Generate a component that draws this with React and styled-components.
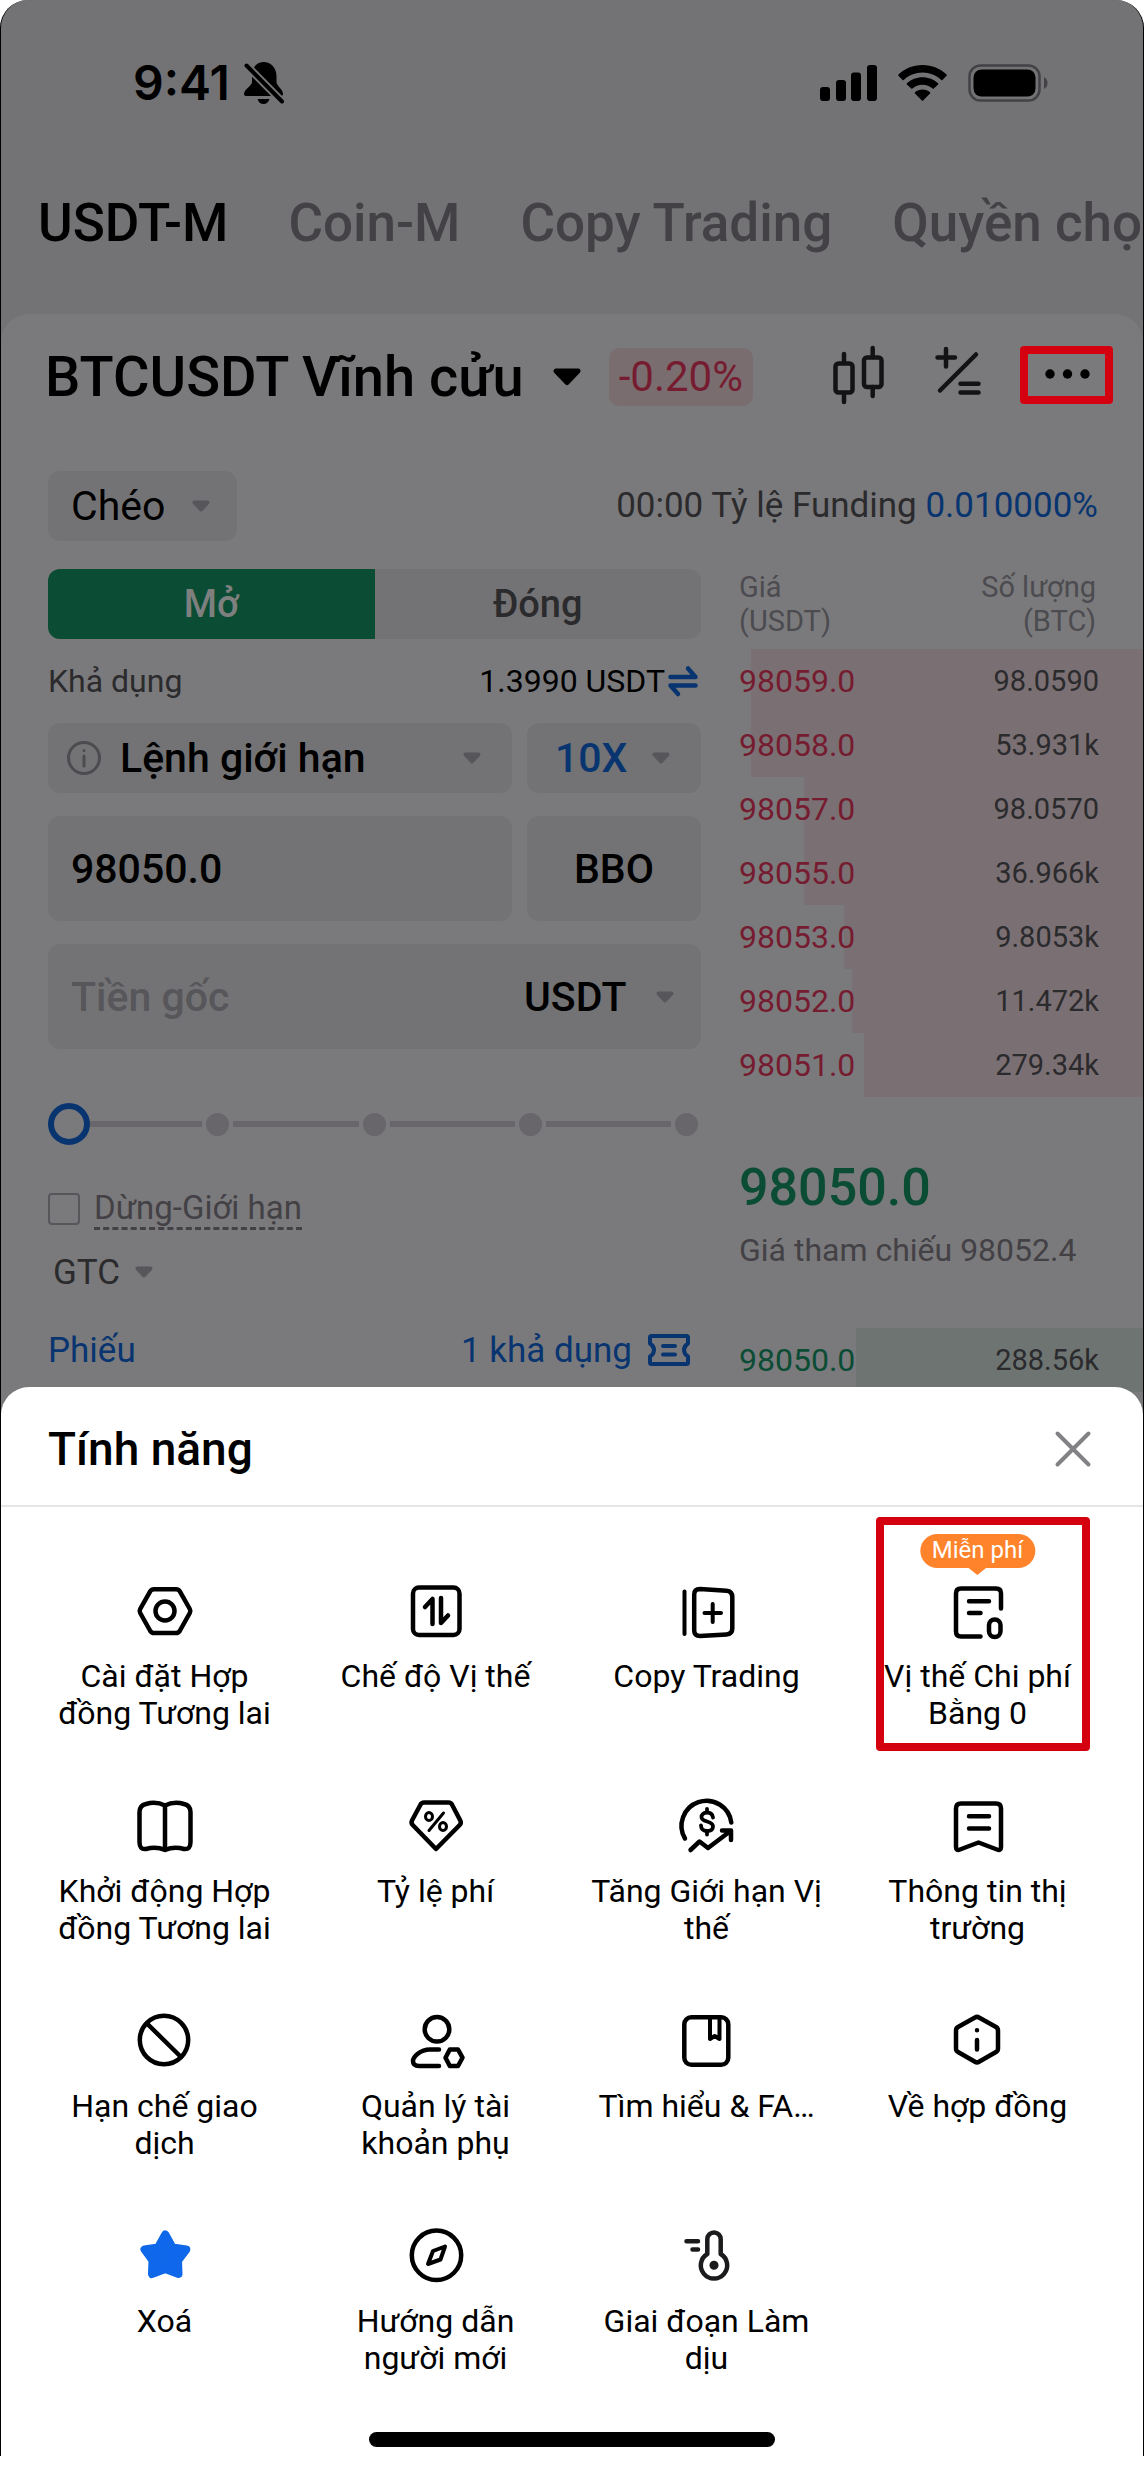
import React, { useState } from "react";
import styled, { createGlobalStyle } from "styled-components";

const color = {
  ink: "#000000",
  screen: "#737375",
  panel: "#7a7a7c",
  field: "#737375",
  strong: "#2b2a2d",
  muted: "#434145",
  faint: "#4c4b4f",
  placeholder: "#57565a",
  rail: "#68666a",
  blue: "#083470",
  red: "#761c30",
  green: "#0b4c34",
  alert: "#d4000f",
  star: "#0f67ea",
};

const GlobalStyle = createGlobalStyle`
  *, *::before, *::after { box-sizing: border-box; }
  body {
    margin: 0;
    padding-bottom: 14px;
    background: #ffffff;
    color: ${color.ink};
    font-family: Roboto, "Noto Sans", sans-serif;
    font-size: 32px;
    overflow-x: hidden;
  }
  button, input, select { font: inherit; color: inherit; margin: 0; }
`;

/* ---------- shell ---------- */

const Frame = styled.div`
  border: 0 solid #000000;
  border-width: 0 1px;
  border-radius: 28px 28px 0 0;
  overflow: hidden;
  background: ${color.screen};
`;

const StatusBar = styled.header`
  display: flex;
  justify-content: space-between;
  align-items: center;
  height: 166px;
  padding: 0 95px 0 132px;
`;

const StatusGroup = styled.div`
  display: flex;
  align-items: center;
  gap: ${(p) => p.$gap}px;
`;

const Clock = styled.span`
  font-family: Inter, sans-serif;
  font-weight: 600;
  font-size: 48px;
  line-height: 56px;
`;

const Tabs = styled.nav`
  display: flex;
  align-items: center;
  gap: 60px;
  height: 114px;
  margin-bottom: 34px;
  padding-left: 37px;
  white-space: nowrap;
`;

const Tab = styled.a`
  font-size: 53px;
  line-height: 64px;
  font-weight: 500;
  text-decoration: none;
  color: ${(p) => (p.$active ? color.ink : color.muted)};
`;

const Panel = styled.main`
  border-radius: 28px 28px 0 0;
  background: ${color.panel};
  padding-bottom: 30px;
`;

/* ---------- instrument ---------- */

const PlainButton = styled.button`
  display: flex;
  align-items: center;
  justify-content: center;
  gap: ${(p) => p.$gap || 0}px;
  padding: 0;
  border: 0;
  background: none;
  color: ${(p) => p.$color || color.ink};
  cursor: pointer;
`;

const Instrument = styled.div`
  display: flex;
  align-items: center;
  justify-content: space-between;
  height: 125px;
  padding: 0 30px 0 44px;
`;

const InstrumentInfo = styled.div`
  display: flex;
  align-items: center;
  gap: 28px;
`;

const Symbol = styled.h1`
  margin: 0;
  font-size: 56px;
  line-height: 64px;
  font-weight: 500;
`;

const Change = styled.span`
  padding: 0 10px;
  border-radius: 10px;
  background: #7a6d70;
  color: ${color.red};
  font-size: 42px;
  line-height: 58px;
`;

const Tools = styled.div`
  display: flex;
  align-items: center;
  padding-bottom: 4px;
`;

const ToolButton = styled(PlainButton)`
  margin-right: ${(p) => p.$after}px;
`;

const MoreButton = styled(PlainButton)`
  width: 93px;
  height: 58px;
  border: 8px solid ${color.alert};
  border-radius: 4px;
`;

/* ---------- margin mode and funding ---------- */

const ModeRow = styled.div`
  display: flex;
  align-items: center;
  justify-content: space-between;
  margin-top: 32px;
  padding: 0 45px 0 47px;
`;

const Funding = styled.p`
  margin: 0;
  font-size: 35px;
  line-height: 40px;
  color: ${color.strong};
`;

const Accent = styled.span`
  color: ${color.blue};
`;

const Field = styled.div`
  display: flex;
  align-items: center;
  gap: ${(p) => p.$gap || 0}px;
  width: ${(p) => (p.$width ? `${p.$width}px` : "auto")};
  height: ${(p) => p.$height}px;
  padding: 0 ${(p) => p.$right || 27}px 0 ${(p) => p.$left || 23}px;
  border-radius: 12px;
  background: ${color.field};
`;

const Select = styled.select`
  flex: ${(p) => (p.$fit ? "none" : "1")};
  min-width: 0;
  padding: 0;
  border: 0;
  background: none;
  appearance: none;
  font-size: ${(p) => p.$size || 41}px;
  font-weight: ${(p) => p.$weight || 500};
  color: ${(p) => p.$color || color.ink};
  outline: none;
`;

/* ---------- trading area ---------- */

const TradeArea = styled.div`
  display: grid;
  grid-template-columns: minmax(0, 653fr) minmax(0, 404fr);
  gap: 38px;
  margin-top: 28px;
  padding-left: 47px;
`;

const OrderForm = styled.form`
  display: flex;
  flex-direction: column;
`;

const Segments = styled.div`
  display: grid;
  grid-template-columns: 1fr 1fr;
  height: 70px;
  border-radius: 12px;
  overflow: hidden;
  background: ${color.field};
`;

const Segment = styled.button`
  padding: 0;
  border: 0;
  font-size: 38px;
  font-weight: 500;
  background: ${(p) => (p.$active ? color.green : "transparent")};
  color: ${(p) => (p.$active ? "#7d807f" : color.strong)};
`;

const FormRow = styled.div`
  display: flex;
  align-items: center;
  justify-content: ${(p) => (p.$start ? "flex-start" : "space-between")};
  gap: ${(p) => p.$gap || 0}px;
  height: ${(p) => p.$height}px;
  padding: 0 ${(p) => p.$right || 0}px 0 ${(p) => p.$left || 0}px;
`;

const Caption = styled.span`
  color: ${(p) => (p.$strong ? color.strong : color.muted)};
`;

const FieldRow = styled.div`
  display: grid;
  grid-template-columns: minmax(0, 464fr) minmax(0, 174fr);
  gap: 15px;
  margin-bottom: 23px;
`;

const TextInput = styled.input`
  flex: 1;
  min-width: 0;
  padding: 0;
  border: 0;
  background: none;
  font-size: 41px;
  font-weight: 500;
  outline: none;
  &::placeholder { color: ${color.placeholder}; opacity: 1; }
`;

const BboButton = styled.button`
  padding: 0;
  border: 0;
  border-radius: 12px;
  background: ${color.field};
  font-size: 41px;
  font-weight: 500;
`;

const SliderBox = styled.div`
  display: grid;
  align-items: center;
  height: 42px;
  margin: 54px 0 32px;
  > * { grid-area: 1 / 1; }
`;

const Rail = styled.div`
  display: flex;
  align-items: center;
  gap: 4px;
  padding: 0 3px 0 29px;
`;

const RailLine = styled.span`
  flex: 1;
  height: 6px;
  background: ${color.rail};
`;

const RailStop = styled.span`
  width: 23px;
  height: 23px;
  border-radius: 50%;
  background: ${color.rail};
`;

const Slider = styled.input`
  width: 100%;
  height: 42px;
  background: none;
  appearance: none;
  outline: none;
  &::-webkit-slider-runnable-track { background: none; height: 42px; }
  &::-webkit-slider-thumb {
    appearance: none;
    width: 42px;
    height: 42px;
    border: 6px solid ${color.blue};
    border-radius: 50%;
    background: ${color.panel};
  }
`;

const Tick = styled.input`
  width: 32px;
  height: 32px;
  border: 2px solid ${color.placeholder};
  border-radius: 4px;
  appearance: none;
`;

const TickLabel = styled.label`
  color: ${color.muted};
  font-size: 33px;
  line-height: 38px;
  border-bottom: 3px dashed ${color.muted};
`;

const VoucherLink = styled.a`
  display: flex;
  align-items: center;
  gap: 16px;
  color: ${color.blue};
  font-size: 35px;
  text-decoration: none;
`;

/* ---------- order book ---------- */

const Book = styled.section`
  min-width: 0;
`;

const BookTable = styled.table`
  width: 100%;
  border-collapse: collapse;
`;

const BookHead = styled.th`
  height: 80px;
  padding: 1px ${(p) => (p.$end ? 47 : 0)}px 0 0;
  vertical-align: top;
  text-align: ${(p) => (p.$end ? "right" : "left")};
  font-size: 29px;
  line-height: 34px;
  font-weight: 400;
  color: ${color.faint};
`;

const tint = { sell: "#7a7073", buy: "#6d7471" };

const BookRow = styled.tr`
  height: 64px;
  background: linear-gradient(${(p) => tint[p.$side]}, ${(p) => tint[p.$side]}) right / ${(p) => p.$depth}% 100% no-repeat;
`;

const Price = styled.td`
  padding: 0;
  color: ${(p) => (p.$side === "sell" ? color.red : color.green)};
`;

const Amount = styled.td`
  padding: 0 44px 0 0;
  text-align: right;
  font-size: 29px;
  color: ${color.strong};
`;

const LastPrice = styled.div`
  display: flex;
  flex-direction: column;
  gap: 13px;
  height: 231px;
  padding-top: 61px;
`;

const LastValue = styled.strong`
  font-size: 52px;
  line-height: 60px;
  font-weight: 500;
  color: ${color.green};
`;

/* ---------- sheet ---------- */

const Sheet = styled.section`
  position: relative;
  margin-top: -40px;
  padding-bottom: 9px;
  border-radius: 28px 28px 0 0;
  background: #ffffff;
`;

const SheetHead = styled.div`
  display: flex;
  align-items: center;
  justify-content: space-between;
  height: 120px;
  padding: 5px 52px 0 47px;
  border-bottom: 2px solid #e6e5e8;
`;

const SheetTitle = styled.h2`
  margin: 0;
  font-size: 46px;
  line-height: 56px;
  font-weight: 500;
`;

const Features = styled.ul`
  display: grid;
  grid-template-columns: repeat(4, minmax(0, 1fr));
  row-gap: 65px;
  margin: 0;
  padding: 76px 30px 54px 28px;
  list-style: none;
`;

const Feature = styled.li`
  position: relative;
  display: flex;
  justify-content: center;
`;

const FeatureButton = styled.button`
  display: flex;
  flex-direction: column;
  align-items: center;
  justify-content: flex-start;
  gap: 19px;
  width: 100%;
  min-height: 150px;
  padding: 0 16px;
  border: 0;
  background: none;
  line-height: 37px;
`;

const Highlight = styled.span`
  position: absolute;
  inset: -66px 23px -18px 34px;
  border: 8px solid ${color.alert};
  border-radius: 4px;
  pointer-events: none;
`;

const Flag = styled.span`
  position: absolute;
  top: -49px;
  left: 50%;
  transform: translateX(-50%);
  height: 34px;
  padding: 0 12px;
  border-radius: 17px;
  background: #ff832b;
  color: #ffffff;
  font-size: 24px;
  line-height: 33px;
  white-space: nowrap;
  &::after {
    content: "";
    position: absolute;
    top: 33px;
    left: 50%;
    margin-left: -10px;
    border: 10px solid transparent;
    border-top: 8px solid #ff832b;
    border-bottom: 0;
  }
`;

const HomeBar = styled.div`
  width: 406px;
  max-width: 50%;
  height: 15px;
  margin: 0 auto;
  border-radius: 8px;
  background: #000000;
`;

/* ---------- icons ---------- */

const IconBase = styled.svg`
  flex: none;
  overflow: visible;
`;

const Svg = ({ w, h, children, sw = 4.5, stroke = "#000000" }) => (
  <IconBase
    width={w}
    height={h}
    viewBox={`0 0 ${w} ${h}`}
    fill="none"
    stroke={stroke}
    strokeWidth={sw}
    strokeLinecap="round"
    strokeLinejoin="round"
    aria-hidden="true"
  >
    {children}
  </IconBase>
);

const Caret = () => (
  <Svg w={18} h={12} stroke={color.placeholder} sw={4}>
    <path d="M2.5 2.5 H15.5 L9 9.5 Z" fill={color.placeholder} />
  </Svg>
);

const BellOff = () => (
  <Svg w={40} h={43} sw={4}>
    <path
      d="M19.5 0 C12 0 8 6 8 14 V20 C8 24 0 27 0 32 Q0 34 2 34 H37 Q39 34 39 32 C39 27 32.500 24 32.500 20 V14 C32.500 6 27 0 19.500 0 Z"
      fill="#000000"
      stroke="none"
    />
    <path d="M13.500 37 H25.500 Q24 42 19.500 42 Q15 42 13.500 37 Z" fill="#000000" stroke="none" />
    <path d="M2.500 3.500 L38 39.500" stroke={color.screen} strokeWidth="8" />
    <path d="M2.500 3.500 L38 39.500" strokeWidth="4" />
  </Svg>
);

const Signal = () => (
  <Svg w={57} h={36} stroke="none">
    <g fill="#000000">
      <rect x="0" y="22" width="10" height="14" rx="3" />
      <rect x="16" y="15" width="10" height="21" rx="3" />
      <rect x="31" y="7.500" width="10" height="28.500" rx="3" />
      <rect x="47" y="0" width="10" height="36" rx="3" />
    </g>
  </Svg>
);

const Wifi = () => (
  <Svg w={49} h={36} stroke="none">
    <g fill="#000000">
      <path d="M24.500 0 C15 0 6.500 3.700 .4 9.600 Q0 10.200 .4 10.800 L4.600 15 Q5.200 15.500 5.800 15 C10.700 10.400 17.300 7.600 24.500 7.600 S38.300 10.400 43.200 15 Q43.800 15.500 44.400 15 L48.600 10.800 Q49 10.200 48.600 9.600 C42.500 3.700 34 0 24.500 0 Z" />
      <path d="M24.500 12.200 C18.500 12.200 13 14.500 8.900 18.200 Q8.400 18.800 8.900 19.400 L13.200 23.600 Q13.800 24.100 14.400 23.600 C17.100 21.200 20.600 19.800 24.500 19.800 S31.900 21.200 34.600 23.600 Q35.200 24.100 35.800 23.600 L40.100 19.400 Q40.600 18.800 40.100 18.200 C36 14.500 30.500 12.200 24.500 12.200 Z" />
      <path d="M24.500 24.500 C21.600 24.500 19 25.500 17 27.200 Q16.500 27.800 17 28.400 L23.900 35.500 Q24.500 36 25.100 35.500 L32 28.400 Q32.500 27.800 32 27.200 C30 25.500 27.400 24.500 24.500 24.500 Z" />
    </g>
  </Svg>
);

const Battery = () => (
  <Svg w={80} h={38} sw={2.5} stroke={color.muted}>
    <rect x="1.500" y="1.500" width="70" height="35" rx="11" />
    <rect x="5.500" y="5.500" width="62" height="27" rx="8" fill="#000000" stroke="none" />
    <path d="M76 13 Q79.500 15 79.500 19 T76 25 Z" fill={color.muted} stroke="none" />
  </Svg>
);

const SwapIcon = () => (
  <Svg w={30} h={30} stroke={color.blue}>
    <path d="M2.500 11 H27.500 L20 2.500 M27.500 19.500 H2.500 L10 28" />
  </Svg>
);

const TicketIcon = () => (
  <Svg w={42} h={32} sw={4} stroke={color.blue}>
    <path d="M3.500 2 H38.500 Q40 2 40 3.500 V9.500 Q36 12 36 16 T40 22.500 V28.500 Q40 30 38.500 30 H3.500 Q2 30 2 28.500 V22.500 Q6 20 6 16 T2 9.500 V3.500 Q2 2 3.500 2 Z M15 12 H27 M15 20.500 H27" />
  </Svg>
);

const ICONS = {
  settings: (
    <>
      <path d="M17 6.200 H39 Q41.500 6.200 42.700 8.200 L52.800 26 Q53.900 28 52.800 30 L42.700 48 Q41.500 50 39 50 H17 Q14.500 50 13.300 48 L3.200 30 Q2.100 28 3.200 26 L13.300 8.200 Q14.500 6.200 17 6.200 Z" />
      <circle cx="28" cy="28" r="9.500" />
    </>
  ),
  mode: (
    <>
      <rect x="5" y="4.500" width="46.500" height="47.500" rx="6" />
      <path d="M17 24 L24.500 16 V41 M33 15 V40 L40 32.500" />
    </>
  ),
  copy: (
    <>
      <path d="M5.500 8.500 V51" strokeWidth="4" />
      <path d="M21 6 L47.500 7.700 Q53.300 8.200 53.300 14 V45.500 Q53.300 51 47.500 51.400 L21 53 Q15.200 53 15.200 47.500 V11.500 Q15.200 6 21 6 Z" />
      <path d="M33.700 21 V39 M25.500 30 H42" strokeWidth="4" />
    </>
  ),
  zero: (
    <>
      <path d="M51 25.500 V10.500 Q51 5.500 46 5.500 H11 Q6 5.500 6 10.500 V48.500 Q6 53.500 11 53.500 H30.500 M19 18.300 H39 M19 30 H30.500" />
      <rect x="39" y="36.500" width="11.500" height="17.500" rx="5.750" />
    </>
  ),
  book: (
    <path d="M28 7.500 Q19 3 9 6 Q2.500 7.500 2.500 14 V44 Q2.500 52 9 51 Q19 48 28 52 Q37 48 47 51 Q53.500 52 53.500 44 V14 Q53.500 7.500 47 6 Q37 3 28 7.500 Z M28 8 V51" />
  ),
  rate: (
    <>
      <path d="M16 4.500 H40.500 Q43 4.500 44.200 7 L52.300 22.500 Q53.600 25 51.700 27 L28 51 L4.700 27 Q2.800 25 4 22.500 L12.300 7 Q13.500 4.500 16 4.500 Z" />
      <g strokeWidth="3">
        <ellipse cx="21" cy="18.500" rx="3.500" ry="4" />
        <ellipse cx="35" cy="28.500" rx="3.500" ry="4" />
        <path d="M35.500 15 L21 32.500" />
      </g>
    </>
  ),
  limit: (
    <>
      <path d="M6 40.500 A25 25 0 1 1 52.300 24.500" />
      <path d="M34 19.500 C33.500 16 31 14.500 28 14.500 C24.500 14.500 22.500 16.500 22.500 19 C22.500 25 34 22 34 28.500 C34 31.500 31.500 33 28 33 C24.500 33 22 31 22 27.500 M28 11 V14 M28 33 V36.500" strokeWidth="3.800" />
      <path d="M11.500 52 L20.500 43.500 L29 50 L51.500 33 M43 32.500 H52 V42" />
    </>
  ),
  news: (
    <path d="M11 5.500 H46 Q51 5.500 51 10.500 V49 Q51 53 47 51.500 L28.500 44.500 L10 51.500 Q6 53 6 49 V10.500 Q6 5.500 11 5.500 Z M19 18.300 H39 M19 30.500 H39" />
  ),
  ban: (
    <>
      <circle cx="27" cy="27" r="24.200" />
      <path d="M10 10.500 L44 44" />
    </>
  ),
  account: (
    <>
      <circle cx="29" cy="16.300" r="12.300" />
      <path d="M31 36.500 H22 C12 36.500 5 44 5 48 Q5 53 11 53 H31" />
      <path d="M37.500 44.700 L41.800 36.500 H50 L54.500 44.700 L50 53 H41.800 Z" />
    </>
  ),
  learn: (
    <>
      <rect x="5.300" y="4.300" width="44" height="47.500" rx="7" />
      <path d="M31 5 V26 L35.700 23 L40.500 26 V5" strokeWidth="4" />
    </>
  ),
  about: (
    <>
      <path d="M25 4.500 Q27 3.300 29 4.500 L46 14 Q48 15.200 48 17.500 V35.500 Q48 38 46 39 L29 48.800 Q27 50 25 48.800 L8 39 Q6 38 6 35.500 V17.500 Q6 15.200 8 14 Z" />
      <path d="M27 27 V36.500 M27 17.200 V17.300" />
    </>
  ),
  star: (
    <path
      d="M28.300 6.500 L35.500 19.500 L49.300 21.500 L41 32.500 L41.500 46 L28.300 41 L15 46 L15.500 32.500 L7.500 21.500 L21 19.500 Z"
      fill={color.star}
      stroke={color.star}
      strokeWidth="8"
    />
  ),
  guide: (
    <>
      <circle cx="28.500" cy="27.300" r="24.700" />
      <path d="M37 18.500 L25 23 L20 36 L32.500 31.500 Z" strokeWidth="4" />
    </>
  ),
  cooling: (
    <g stroke="#1b1b1d">
      <path d="M28.300 26 V11.200 A6.700 6.700 0 0 1 41.700 11.200 V26 A13.200 13.200 0 1 1 28.300 26 Z" />
      <circle cx="35" cy="37.300" r="2.300" />
      <path d="M7.500 13.200 H19 M13.500 21.500 H19" />
    </g>
  ),
};

/* ---------- data ---------- */

const asks = [
  { price: "98059.0", amount: "98.0590", depth: 97 },
  { price: "98058.0", amount: "53.931k", depth: 97 },
  { price: "98057.0", amount: "98.0570", depth: 84 },
  { price: "98055.0", amount: "36.966k", depth: 84 },
  { price: "98053.0", amount: "9.8053k", depth: 74 },
  { price: "98052.0", amount: "11.472k", depth: 72 },
  { price: "98051.0", amount: "279.34k", depth: 69 },
];

const bids = [{ price: "98050.0", amount: "288.56k", depth: 71 }];

const features = [
  { icon: "settings", label: "Cài đặt Hợp đồng Tương lai" },
  { icon: "mode", label: "Chế độ Vị thế" },
  { icon: "copy", label: "Copy Trading" },
  { icon: "zero", label: "Vị thế Chi phí Bằng 0", flag: "Miễn phí" },
  { icon: "book", label: "Khởi động Hợp đồng Tương lai" },
  { icon: "rate", label: "Tỷ lệ phí" },
  { icon: "limit", label: "Tăng Giới hạn Vị thế" },
  { icon: "news", label: "Thông tin thị trường" },
  { icon: "ban", label: "Hạn chế giao dịch" },
  { icon: "account", label: "Quản lý tài khoản phụ" },
  { icon: "learn", label: "Tìm hiểu & FA…" },
  { icon: "about", label: "Về hợp đồng" },
  { icon: "star", label: "Xoá" },
  { icon: "guide", label: "Hướng dẫn người mới" },
  { icon: "cooling", label: "Giai đoạn Làm dịu" },
];

const BookRows = ({ rows, side }) => (
  <tbody>
    {rows.map((r) => (
      <BookRow key={r.price} $side={side} $depth={r.depth}>
        <Price $side={side}>{r.price}</Price>
        <Amount>{r.amount}</Amount>
      </BookRow>
    ))}
  </tbody>
);

export default function App() {
  const [percent, setPercent] = useState(0);
  const [price, setPrice] = useState("98050.0");

  return (
    <>
      <GlobalStyle />
      <Frame>
        <StatusBar>
          <StatusGroup $gap={14}>
            <Clock>9:41</Clock>
            <BellOff />
          </StatusGroup>
          <StatusGroup $gap={21}>
            <Signal />
            <Wifi />
            <Battery />
          </StatusGroup>
        </StatusBar>

        <Tabs>
          <Tab href="#usdt-m" $active>USDT-M</Tab>
          <Tab href="#coin-m">Coin-M</Tab>
          <Tab href="#copy">Copy Trading</Tab>
          <Tab href="#options">Quyền chọn</Tab>
        </Tabs>

        <Panel>
          <Instrument>
            <InstrumentInfo>
              <PlainButton $gap={29}>
                <Symbol>BTCUSDT Vĩnh cửu</Symbol>
                <Svg w={28} h={18} sw={5}>
                  <path d="M3 3 H25 L14 14.500 Z" fill="#000000" />
                </Svg>
              </PlainButton>
              <Change>-0.20%</Change>
            </InstrumentInfo>
            <Tools>
              <ToolButton aria-label="Biểu đồ" $after={51}>
                <Svg w={52} h={58} stroke="#131316">
                  <rect x="3.500" y="17.500" width="17" height="29" rx="3" />
                  <path d="M12 8 V17 M12 47 V56" />
                  <rect x="32" y="11.500" width="17.500" height="29.500" rx="3" />
                  <path d="M40.700 2 V11 M40.700 41 V50" />
                </Svg>
              </ToolButton>
              <ToolButton aria-label="Máy tính" $after={39}>
                <Svg w={46} h={58} stroke="#131316">
                  <path d="M2.500 11.500 H20 M11 3 V20.500 M5 44.500 L41 8.500 M25.500 37.700 H43.500 M25.500 46.500 H43.500" />
                </Svg>
              </ToolButton>
              <MoreButton aria-label="Thêm">
                <Svg w={46} h={10} stroke="none">
                  <g fill="#000000">
                    <circle cx="6" cy="4" r="4.700" />
                    <circle cx="23.500" cy="4" r="4.700" />
                    <circle cx="41" cy="4" r="4.700" />
                  </g>
                </Svg>
              </MoreButton>
            </Tools>
          </Instrument>

          <ModeRow>
            <Field $height={70} $width={189}>
              <Select aria-label="Chế độ ký quỹ" $weight={400}>
                <option>Chéo</option>
              </Select>
              <Caret />
            </Field>
            <Funding>
              00:00 Tỷ lệ Funding <Accent>0.010000%</Accent>
            </Funding>
          </ModeRow>

          <TradeArea>
            <OrderForm onSubmit={(e) => e.preventDefault()}>
              <Segments>
                <Segment type="button" $active>Mở</Segment>
                <Segment type="button">Đóng</Segment>
              </Segments>

              <FormRow $height={84} $right={3}>
                <Caption $strong>Khả dụng</Caption>
                <PlainButton type="button" $gap={3}>
                  1.3990 USDT
                  <SwapIcon />
                </PlainButton>
              </FormRow>

              <FieldRow>
                <Field $height={70} $gap={19} $left={19} $right={31}>
                  <Svg w={34} h={34} sw={3} stroke={color.faint}>
                    <circle cx="17" cy="17" r="15.500" />
                    <path d="M17 15 V25 M17 9.500 V9.600" />
                  </Svg>
                  <Select aria-label="Loại lệnh">
                    <option>Lệnh giới hạn</option>
                  </Select>
                  <Caret />
                </Field>
                <Field $height={70} $left={28} $right={31}>
                  <Select aria-label="Đòn bẩy" $color={color.blue}>
                    <option>10X</option>
                  </Select>
                  <Caret />
                </Field>
              </FieldRow>

              <FieldRow>
                <Field $height={105}>
                  <TextInput aria-label="Giá" value={price} onChange={(e) => setPrice(e.target.value)} />
                </Field>
                <BboButton type="button">BBO</BboButton>
              </FieldRow>

              <Field $height={105} $gap={29}>
                <TextInput aria-label="Tiền gốc" placeholder="Tiền gốc" />
                <Select aria-label="Đơn vị" $fit>
                  <option>USDT</option>
                </Select>
                <Caret />
              </Field>

              <SliderBox>
                <Rail>
                  {[25, 50, 75, 100].map((stop) => (
                    <React.Fragment key={stop}>
                      <RailLine />
                      <RailStop />
                    </React.Fragment>
                  ))}
                </Rail>
                <Slider
                  type="range"
                  aria-label="Tỷ lệ ký quỹ"
                  value={percent}
                  onChange={(e) => setPercent(Number(e.target.value))}
                />
              </SliderBox>

              <FormRow $start $height={64} $gap={14}>
                <Tick type="checkbox" id="stop-limit" />
                <TickLabel htmlFor="stop-limit">Dừng-Giới hạn</TickLabel>
              </FormRow>

              <FormRow $start $height={62} $gap={14} $left={5}>
                <Select aria-label="Hiệu lực" $fit $size={35} $weight={400} $color={color.strong}>
                  <option>GTC</option>
                </Select>
                <Caret />
              </FormRow>

              <FormRow $height={94} $right={11}>
                <VoucherLink href="#voucher">Phiếu</VoucherLink>
                <VoucherLink href="#voucher-list">
                  1 khả dụng
                  <TicketIcon />
                </VoucherLink>
              </FormRow>
            </OrderForm>

            <Book>
              <BookTable>
                <thead>
                  <tr>
                    <BookHead>Giá<br />(USDT)</BookHead>
                    <BookHead $end>Số lượng<br />(BTC)</BookHead>
                  </tr>
                </thead>
                <BookRows rows={asks} side="sell" />
              </BookTable>
              <LastPrice>
                <LastValue>98050.0</LastValue>
                <Caption>Giá tham chiếu 98052.4</Caption>
              </LastPrice>
              <BookTable>
                <BookRows rows={bids} side="buy" />
              </BookTable>
            </Book>
          </TradeArea>
        </Panel>

        <Sheet>
          <SheetHead>
            <SheetTitle>Tính năng</SheetTitle>
            <PlainButton aria-label="Đóng">
              <Svg w={36} h={36} sw={4} stroke="#828185">
                <path d="M2.500 2.500 L33.500 33.500 M33.500 2.500 L2.500 33.500" />
              </Svg>
            </PlainButton>
          </SheetHead>
          <Features>
            {features.map((f) => (
              <Feature key={f.icon}>
                <FeatureButton>
                  <Svg w={56} h={56}>{ICONS[f.icon]}</Svg>
                  {f.label}
                </FeatureButton>
                {f.flag && <Flag>{f.flag}</Flag>}
                {f.flag && <Highlight />}
              </Feature>
            ))}
          </Features>
          <HomeBar />
        </Sheet>
      </Frame>
    </>
  );
}
